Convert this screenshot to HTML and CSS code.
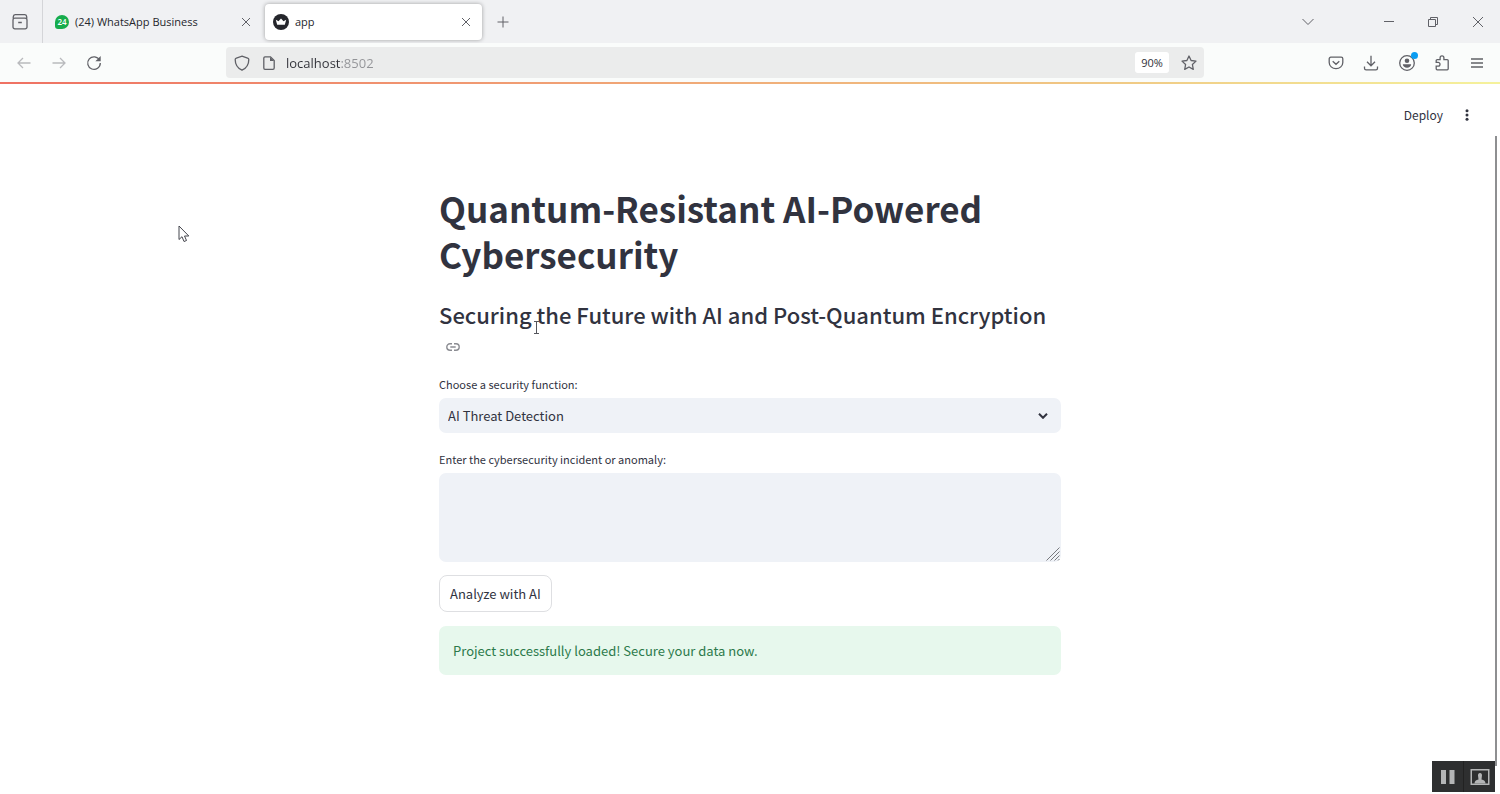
FILE: index.html
```html
<!DOCTYPE html>
<html lang="en">
<head>
<meta charset="utf-8">
<meta name="viewport" content="width=device-width, initial-scale=1">
<title>app</title>
<link rel="stylesheet" href="styles.css">
</head>
<body>
<div class="window">
  <header class="tabbar">
    <button class="icon-btn recent" aria-label="Recent browsing"><svg width="18" height="18" viewBox="0 0 18 18"><path d="M4 1.700h10M3.800 5.200h10.400a1.800 1.800 0 0 1 1.800 1.800v7a1.800 1.800 0 0 1-1.800 1.800H3.800A1.800 1.800 0 0 1 2 14V7a1.800 1.800 0 0 1 1.800-1.800zM2.200 5.500c0-2.300.4-3.800 2-3.800M15.800 5.500c0-2.300-.4-3.800-2-3.800M7.200 9.500h3.600"/></svg></button>
    <div class="tab">
      <span class="badge">24</span>
      <a class="tab-title" href="#">(24) WhatsApp Business</a>
      <button class="icon-btn" aria-label="Close tab"><svg width="10" height="10" viewBox="0 0 10 10"><path d="M1 1l8 8M9 1L1 9"/></svg></button>
    </div>
    <div class="tab tab-active">
      <svg class="crown" width="16" height="16" viewBox="0 0 16 16"><circle cx="8" cy="8" r="8"/><path d="M2.800 5.800l2.700 1.500L8 4.500l2.500 2.800 2.700-1.500-1.400 5H4.200z"/></svg>
      <a class="tab-title" href="#">app</a>
      <button class="icon-btn" aria-label="Close tab"><svg width="10" height="10" viewBox="0 0 10 10"><path d="M1 1l8 8M9 1L1 9"/></svg></button>
    </div>
    <button class="icon-btn new-tab" aria-label="New tab"><svg width="12" height="12" viewBox="0 0 12 12"><path d="M6 .5v11M.5 6h11"/></svg></button>
    <div class="win-controls">
      <button class="icon-btn all-tabs" aria-label="List all tabs"><svg width="12" height="8" viewBox="0 0 12 8"><path d="M.5 1L6 6.500 11.500 1"/></svg></button>
      <button class="icon-btn" aria-label="Minimize"><svg width="10" height="10" viewBox="0 0 10 10"><path d="M0 4.500h10"/></svg></button>
      <button class="icon-btn" aria-label="Restore"><svg width="10" height="10" viewBox="0 0 10 10"><path d="M.5 2.500h7v7h-7zM2.500 2.500v-2h7v7h-2"/></svg></button>
      <button class="icon-btn" aria-label="Close window"><svg width="12" height="12" viewBox="0 0 12 12"><path d="M1 1l10 10M11 1L1 11"/></svg></button>
    </div>
  </header>

  <nav class="toolbar">
    <div class="history">
      <button class="icon-btn faded" aria-label="Back"><svg width="14" height="12" viewBox="0 0 14 12"><path d="M6 1L1 6l5 5M1 6h12.500"/></svg></button>
      <button class="icon-btn faded" aria-label="Forward"><svg width="14" height="12" viewBox="0 0 14 12"><path d="M8 1l5 5-5 5M13 6H.5"/></svg></button>
      <button class="icon-btn" aria-label="Reload"><svg width="16" height="16" viewBox="0 0 16 16"><path d="M13.600 5.200A6.300 6.300 0 1 0 14.300 8"/><path class="solid" d="M14.700 1v5.300H9.400z"/></svg></button>
    </div>
    <div class="urlbar">
      <svg width="16" height="16" viewBox="0 0 16 16"><path d="M8 1.200l5.600 1.900c.8.300 1.200.7 1.200 1.500 0 5.600-2.300 8.700-6.800 10.600C3.500 13.300 1.200 10.200 1.200 4.600c0-.8.400-1.200 1.200-1.500z"/></svg>
      <svg width="12" height="14" viewBox="0 0 12 14"><path d="M2 .8h5.500L11.200 4.500V12a1.300 1.300 0 0 1-1.300 1.300H2A1.300 1.300 0 0 1 .8 12V2A1.300 1.300 0 0 1 2 .8z"/><path class="solid" d="M7 1v4h4z"/></svg>
      <input class="url" type="text" aria-label="Address" value="localhost:8502">
      <button class="zoom">90%</button>
      <button class="icon-btn" aria-label="Bookmark"><svg width="16" height="16" viewBox="0 0 16 16"><path stroke-linejoin="round" d="M8 1l2.100 4.500 4.900.6-3.600 3.400.9 4.900L8 12l-4.300 2.400.9-4.900L1 6.100l4.900-.6z"/></svg></button>
    </div>
    <div class="tools">
      <button class="icon-btn" aria-label="Save to Pocket"><svg width="16" height="16" viewBox="0 0 16 16"><path d="M2.800 2.200h10.400a1.600 1.600 0 0 1 1.600 1.600v3.600a6.800 6.300 0 0 1-13.600 0V3.800a1.600 1.600 0 0 1 1.600-1.600zM4.700 6.200L8 9.300l3.300-3.100"/></svg></button>
      <button class="icon-btn" aria-label="Downloads"><svg width="16" height="16" viewBox="0 0 16 16"><path d="M8 .8v9.800M4 6.800l4 4 4-4M1.500 11.500v1.700a1.600 1.600 0 0 0 1.600 1.600h9.800a1.600 1.600 0 0 0 1.600-1.600v-1.700"/></svg></button>
      <button class="icon-btn account" aria-label="Account"><svg width="18" height="18" viewBox="0 0 18 18"><circle cx="9" cy="9" r="7.300"/><circle class="solid" cx="9" cy="6.800" r="2.300"/><path class="solid" d="M4.800 10.300h8.400c-.2 2.200-1.900 3.400-4.200 3.400s-4-1.200-4.200-3.400z"/></svg></button>
      <button class="icon-btn" aria-label="Extensions"><svg width="16" height="16" viewBox="0 0 16 16"><path d="M2.200 7V5.600a1 1 0 0 1 1-1h2.900V2.800a1.900 1.900 0 0 1 3.800 0v1.800h3.300a1 1 0 0 1 1 1v8.200a1 1 0 0 1-1 1H3.200a1 1 0 0 1-1-1v-2.600h1.900a1.900 1.900 0 0 0 0-3.800H2.200z"/></svg></button>
      <button class="icon-btn" aria-label="Menu"><svg width="12" height="10" viewBox="0 0 12 10"><path d="M0 1h12M0 5h12M0 9h12"/></svg></button>
    </div>
  </nav>

  <div class="page">
    <div class="app-bar">
      <button class="deploy">Deploy</button>
      <button class="icon-btn dots" aria-label="Main menu"><svg width="4" height="12" viewBox="0 0 4 12"><circle cx="2" cy="1.700" r="1.500"/><circle cx="2" cy="6" r="1.500"/><circle cx="2" cy="10.300" r="1.500"/></svg></button>
    </div>
    <main class="content">
      <h1>Quantum-Resistant AI-Powered Cybersecurity</h1>
      <h2>Securing the Future with AI and Post-Quantum Encryption
        <a class="anchor" href="#" aria-label="Link to heading"><svg width="14" height="8" viewBox="0 0 14 8"><path d="M6 .8H4a3.200 3.200 0 0 0 0 6.400h2M8 .8h2a3.200 3.200 0 0 1 0 6.400H8M4.300 4h5.400"/></svg></a></h2>
      <label for="function">Choose a security function:</label>
      <div class="field">
        <select id="function"><option>AI Threat Detection</option></select>
        <svg class="chevron" width="10" height="6" viewBox="0 0 10 6"><path d="M1 .8l4 4 4-4"/></svg>
      </div>
      <label for="incident">Enter the cybersecurity incident or anomaly:</label>
      <div class="field">
        <textarea id="incident"></textarea>
        <svg class="grip" width="14" height="14" viewBox="0 0 14 14"><path d="M.5 13.500l13-13M4.500 13.500l9-9M8.500 13.500l5-5M12 13.500l1.500-1.500"/></svg>
      </div>
      <button class="analyze">Analyze with AI</button>
      <div class="success" role="status">Project successfully loaded! Secure your data now.</div>
    </main>
    <div class="scrollbar"></div>
  </div>

  <div class="recorder">
    <button aria-label="Pause"><svg width="16" height="16" viewBox="0 0 16 16"><path d="M1 1h5v14H1zM9.500 1h5v14h-5z"/></svg></button>
    <button aria-label="Webcam"><svg width="20" height="16" viewBox="0 0 20 16"><path fill-rule="evenodd" d="M.5 0h19v16H.5zM2 1.500v13h16v-13z"/><path d="M4.500 14.500c0-2.500 1.500-3.500 4-4l-.3-2.500C7.500 5.500 8.500 4 10 4s2.500 1.500 1.800 4l-.3 2.500c2.500.5 4 1.500 4 4z"/></svg></button>
  </div>
  <svg class="pointer" width="12" height="18" viewBox="0 0 12 18"><path d="M1 1v13.500l3-2.800 2 4.800 2.500-1-2-4.500h4.300z"/></svg>
  <svg class="caret" width="7" height="13" viewBox="0 0 7 13"><path d="M1 .5h5M1 12.500h5M3.500 .5v12"/></svg>
</div>
</body>
</html>
```

FILE: styles.css
```css
* { box-sizing: border-box; }
body { margin: 0; background: #fff; color: #31333f; font-family: "Noto Sans CJK SC", "Open Sans", sans-serif; }
button, input, select, textarea { font: inherit; color: inherit; border: 0; background: none; padding: 0; margin: 0; }
svg { display: block; flex: none; fill: none; stroke: currentColor; }
.solid { fill: currentColor; stroke: none; }

.window { position: relative; display: flex; flex-direction: column; min-height: 100vh; }
.icon-btn { display: flex; align-items: center; justify-content: center; flex: none; color: #606167; }

.tabbar { display: flex; align-items: center; height: 43px; background: #f0f1f3; font: 11px "Open Sans", sans-serif; color: #25262c; }
.recent { width: 42px; height: 43px; padding-right: 3px; padding-top: 1px; }
.recent svg { stroke-width: 1.3; }
.tab { display: flex; align-items: center; gap: 6px; width: 217px; height: 36px; padding: 0 11px 0 8px; }
.tab:not(.tab-active) { width: 223px; height: 43px; padding: 0 14px 0 12px; border-left: 1px solid #d4d5d8; }
.tab-active { background: #fff; border-radius: 4px; box-shadow: 0 0 4px rgba(0, 0, 0, .35); }
.tab-title { flex: 1; color: inherit; text-decoration: none; white-space: nowrap; }
.badge { display: grid; place-items: center; width: 14px; height: 14px; border-radius: 50% 50% 50% 3px; background: #17ac4c; color: #fff; font-size: 8px; font-weight: 600; }
.crown circle { fill: #25262c; stroke: none; }
.crown path { fill: #fff; stroke: none; }
.new-tab { padding-left: 15px; }
.win-controls { display: flex; align-items: center; gap: 34px; margin-left: auto; padding-right: 16px; }
.all-tabs { margin-right: 36px; }

.toolbar { display: flex; align-items: center; height: 41px; background: #fafcfb; border-bottom: 2px solid; border-image: linear-gradient(90deg, #ef7163, #f0a375 40%, #f0ca85 75%, #f5f29c) 1; }
.history { display: flex; gap: 20px; width: 15%; padding-left: 16px; align-items: center; }
.history .icon-btn { width: 15px; }
.history .faded { color: #b9babd; }
.urlbar { display: flex; align-items: center; flex: 0 1 978px; height: 31px; margin-left: 1px; padding: 0 7px 0 8px; border-radius: 4px; background: #ebecec; color: #606167; }
.urlbar > svg:nth-child(2) { margin: 0 11px 0 13px; }
.url { flex: 1; min-width: 0; font: 13px "Open Sans", sans-serif; color: transparent; background: linear-gradient(90deg, #303138 55px, #929397 55px); background-clip: text; -webkit-background-clip: text; }
.zoom { width: 34px; height: 21px; margin-right: 12px; border-radius: 3px; background: #fff; font: 11px "Open Sans", sans-serif; color: #303138; }
.tools { display: flex; align-items: center; justify-content: space-between; width: 159px; margin-left: auto; margin-right: 14px; }
.tools .icon-btn { width: 18px; }
.urlbar svg, .tools svg, .history svg { stroke-width: 1.3; }
.account { position: relative; }
.account::after { content: ""; position: absolute; right: -2px; top: -2px; width: 7px; height: 7px; border-radius: 50%; background: #0a9df2; }

.page { position: relative; flex: 1; padding-bottom: 100px; }
.app-bar { display: flex; align-items: center; justify-content: flex-end; gap: 22px; height: 52px; padding: 10px 31px 0 0; }
.deploy { font-size: 12px; line-height: 18px; }
.dots { color: #31333f; }
.dots svg { fill: currentColor; stroke: none; }
.content { display: flex; flex-direction: column; width: 100%; max-width: 622px; margin: 0 auto; padding-top: 49px; }
h1 { margin: 0; font-size: 35px; font-weight: 700; line-height: 46px; }
h2 { margin: 22px 0 0; font-size: 22px; font-weight: 500; line-height: 30px; }
.anchor { display: block; width: 14px; margin: 14px 0 0 7px; color: #8b8c92; }
.anchor svg { stroke-width: 1.4; }
label { font-size: 11px; line-height: 18px; margin: 24px 0 5px; }
.field { position: relative; display: flex; }
select { flex: 1; height: 35px; padding: 0 9px; border-radius: 7px; background: #eff2f7; appearance: none; font-size: 13px; }
.chevron { position: absolute; right: 13px; top: 15px; stroke-width: 2; pointer-events: none; }
label + .field + label { margin-top: 17px; }
textarea { flex: 1; height: 89px; padding: 9px; border-radius: 7px; background: #eff2f7; resize: none; font-size: 13px; }
.grip { position: absolute; right: 1px; bottom: 1px; color: #77797e; pointer-events: none; }
.analyze { align-self: flex-start; height: 37px; margin: 13px 0 14px; padding: 0 10px; border: 1px solid #dedfe2; border-radius: 8px; font-size: 13px; }
.success { padding: 14px; border-radius: 7px; background: #e7f8ed; color: #2c7a4b; font-size: 13px; line-height: 21px; }
.scrollbar { position: absolute; right: 3px; top: 52px; bottom: 28px; width: 2px; background: #8e8f91; }

.recorder { position: absolute; right: 5px; bottom: 2px; display: flex; width: 63px; height: 31px; background: #2e2f30; color: #b4b5b6; }
.recorder button { flex: 1; display: grid; place-items: center; }
.recorder button + button { border-left: 1px solid #222; }
.recorder svg { fill: currentColor; stroke: none; }
.pointer { position: absolute; left: 178px; top: 225px; fill: #fff; color: #45464e; }
.caret { position: absolute; left: 533px; top: 321px; color: #55565c; }
```
